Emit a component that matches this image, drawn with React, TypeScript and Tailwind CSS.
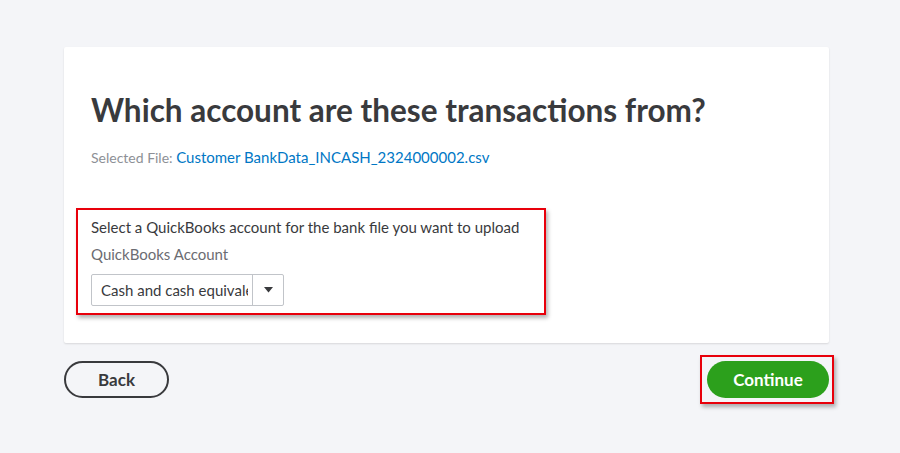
import React from "react";

const App: React.FC = () => {
  return (
    <div
      className="w-[900px] h-[453px] bg-[#f4f5f8] pt-[47px] px-[64px] text-[#393a3d]"
      style={{ fontFamily: "Lato, 'Open Sans', sans-serif" }}
    >
      <section className="w-[765px] h-[296px] bg-white rounded-[2px] shadow-[0_1px_2px_rgba(0,0,0,0.12)] pt-[44px] px-[27px]">
        <h1 className="text-[31.5px] leading-[38px] font-bold text-[#393a3d]">
          Which account are these transactions from?
        </h1>
        <p className="mt-[18px] text-[14px] leading-[20px]">
          <span className="text-[#8d9096]">Selected File: </span>
          <a href="#" className="text-[15px] text-[#0077c5]">
            Customer BankData_INCASH_2324000002.csv
          </a>
        </p>

        <div className="mt-[40px] -ml-[15px] w-[470px] h-[107px] border-2 border-[#e8000b] shadow-[2px_3px_4px_rgba(0,0,0,0.3)] pt-[7px] px-[13px]">
          <p className="text-[15px] leading-[20px] text-[#393a3d]">
            Select a QuickBooks account for the bank file you want to upload
          </p>
          <p className="mt-[7px] text-[15px] leading-[20px] text-[#6b6c72]">
            QuickBooks Account
          </p>
          <div className="mt-[10px] flex w-[193px] h-[32px] border border-[#c1c4c9] rounded-[2px] bg-white">
            <div className="w-[160px] flex items-center pl-[9px] pr-[4px] overflow-hidden whitespace-nowrap text-[15px] text-[#393a3d]">
              <span className="block overflow-hidden">Cash and cash equivalents</span>
            </div>
            <div className="flex-1 flex items-center justify-center border-l border-[#c1c4c9]">
              <svg width="9" height="6" viewBox="0 0 9 6">
                <path d="M0 0h9L4.5 5.5z" fill="#393a3d" />
              </svg>
            </div>
          </div>
        </div>
      </section>

      <div className="flex items-start justify-between">
        <button className="mt-[18px] w-[105px] h-[37px] rounded-full border-2 border-[#393a3d] bg-transparent text-[17px] font-bold text-[#393a3d]">
          Back
        </button>
        <div className="mt-[12px] mr-[2px] border-2 border-[#e8000b] pl-[5px] pr-[3px] py-[4px] shadow-[2px_3px_4px_rgba(0,0,0,0.3)]">
          <button className="block w-[122px] h-[37px] rounded-full bg-[#2ca01c] text-[17px] font-bold text-white">
            Continue
          </button>
        </div>
      </div>
    </div>
  );
};

export default App;
